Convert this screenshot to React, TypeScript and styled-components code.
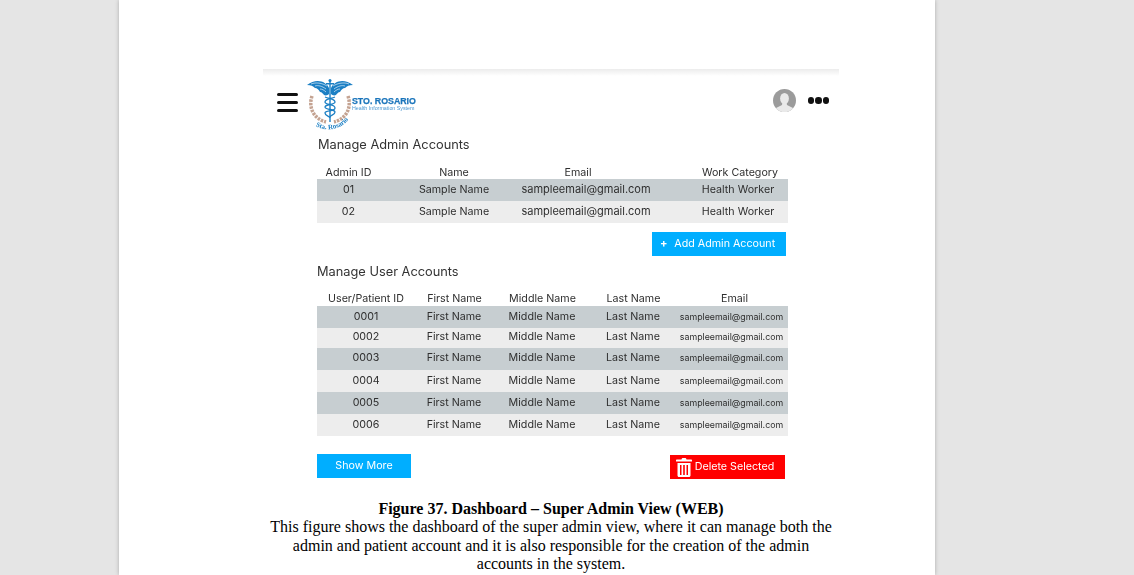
import React from 'react';
import styled, { createGlobalStyle } from 'styled-components';

const adminRows = [
  { id: '01', name: 'Sample Name', email: 'sampleemail@gmail.com', work: 'Health Worker' },
  { id: '02', name: 'Sample Name', email: 'sampleemail@gmail.com', work: 'Health Worker' },
];

const userRows = [
  { id: '0001', height: 22, lift: 1 },
  { id: '0002', height: 20, lift: 2 },
  { id: '0003', height: 22, lift: 2 },
  { id: '0004', height: 22, lift: 1 },
  { id: '0005', height: 22, lift: 1 },
  { id: '0006', height: 22, lift: 1 },
];

const adminColumns = '63px 148px 116px 144px';
const userColumns = '98px 78px 98px 84px 113px';

const GlobalStyle = createGlobalStyle`
  html, body {
    margin: 0;
    height: 575px;
    overflow: hidden;
    background: #e5e5e5;
  }
`;

const Paper = styled.div`
  width: 816px;
  height: 575px;
  margin-left: 119px;
  padding: 69px 96px 0 144px;
  box-sizing: border-box;
  background: #fff;
  box-shadow: 0 0 4px rgba(0, 0, 0, 0.25);
  overflow: hidden;
`;

const Figure = styled.div`
  background: linear-gradient(#ececec, #fff 7px);
`;

const Shot = styled.div`
  font-family: Inter, "Noto Sans", sans-serif;
  color: #2f2f2f;
  filter: blur(0.25px);
`;

const TopBar = styled.div`
  height: 67px;
  display: flex;
  align-items: flex-start;
  padding: 10px 10px 0 14px;
  box-sizing: border-box;
`;

const Burger = styled.div`
  width: 21px;
  margin: 14px 9px 0 0;
  display: flex;
  flex-direction: column;
  gap: 5px;
  span {
    height: 3px;
    border-radius: 2px;
    background: #111;
  }
`;

const LogoMark = styled.svg`
  flex: none;
  margin-right: -1px;
`;

const BrandText = styled.div`
  margin: 17px 0 0 0;
  font-family: "Liberation Sans", Arial, sans-serif;
  color: #1b75bb;
  strong {
    display: block;
    font-size: 8.8px;
    line-height: 10px;
    white-space: nowrap;
    -webkit-text-stroke: 0.25px #1b75bb;
  }
  small {
    display: block;
    font-size: 5.3px;
    line-height: 5px;
    color: #4a97d2;
    white-space: nowrap;
  }
`;

const TopActions = styled.div`
  margin: 10px 0 0 auto;
  display: flex;
  align-items: center;
  gap: 12px;
`;

const Dots = styled.div`
  display: flex;
  gap: 1px;
  i {
    width: 6.5px;
    height: 6.5px;
    border-radius: 50%;
    background: #111;
  }
`;

const Content = styled.div`
  margin-left: 54px;
  width: 471px;
`;

const SectionTitle = styled.h2<{ $indent?: number; $top?: number }>`
  margin: ${(p) => p.$top ?? 0}px 0 0 ${(p) => p.$indent ?? 0}px;
  font-size: 12.8px;
  line-height: 18px;
  font-weight: 400;
  color: #333;
`;

const Row = styled.div<{ $columns: string; $height: number; $tone?: 'dark' | 'light'; $lift?: number }>`
  display: grid;
  grid-template-columns: ${(p) => p.$columns};
  height: ${(p) => p.$height}px;
  box-sizing: border-box;
  padding-bottom: ${(p) => (p.$lift ?? 0) * 2}px;
  align-items: center;
  background: ${(p) => (p.$tone === 'dark' ? '#c7ced1' : p.$tone === 'light' ? '#ededed' : 'transparent')};
`;

const Cell = styled.div<{ $size?: number; $shift?: number; $pull?: number }>`
  display: flex;
  justify-content: center;
  white-space: nowrap;
  font-size: ${(p) => p.$size ?? 10.7}px;
  padding-left: ${(p) => p.$shift ?? 0}px;
  padding-right: ${(p) => p.$pull ?? 0}px;
`;

const Table = styled.div<{ $top: number }>`
  margin-top: ${(p) => p.$top}px;
`;

const ActionRight = styled.div`
  display: flex;
  justify-content: flex-end;
  margin: 9px 2px 0 0;
`;

const Button = styled.button<{ $color: string; $width: number }>`
  width: ${(p) => p.$width}px;
  height: 24px;
  padding: 0 0 2px;
  box-sizing: border-box;
  border: none;
  background: ${(p) => p.$color};
  color: #fff;
  font-family: inherit;
  font-size: 10.7px;
  display: flex;
  align-items: center;
  justify-content: center;
  gap: 7px;
`;

const PlusMark = styled.span`
  font-size: 11px;
  font-weight: 700;
  margin-left: -3px;
`;

const Footer = styled.div`
  display: flex;
  justify-content: space-between;
  align-items: flex-start;
  margin: 18px 3px 0 0;
`;

const DeleteButton = styled(Button)`
  margin-top: 1px;
  gap: 3px;
  padding-right: 5px;
  svg {
    margin-top: 2px;
  }
`;

const Caption = styled.div`
  margin-top: 21px;
  font-family: "Liberation Serif", "Times New Roman", serif;
  font-size: 16px;
  line-height: 18.4px;
  color: #000;
  text-align: center;
  white-space: nowrap;
  b {
    display: block;
  }
`;

const Logo = () => (
  <LogoMark width="46" height="52" viewBox="0 0 46 52">
    <g fill="#1b7fc4">
      <path d="M22 9C19 2 9-1 0 6c4 0 6 1 8 3 2 0 4 2 5 4 2 0 3 2 4 3 2 1 4 0 5-1z" />
      <path d="M24 9c3-7 13-10 22-3-4 0-6 1-8 3-2 0-4 2-5 4-2 0-3 2-4 3-2 1-4 0-5-1z" />
      <rect x="22.300" y="1" width="1.400" height="42" />
      <rect x="19" y="4" width="8" height="1.500" />
      <circle cx="23" cy="1.500" r="1.500" />
    </g>
    <g fill="none" stroke="#fff" strokeWidth="0.6">
      <path d="M20 7C15 4 9 3 4 5M19 10C15 7 11 6 8 7M19 13c-2-2-4-3-6-3" />
      <path d="M26 7c5-3 11-4 16-2M27 10c4-3 8-4 11-3M27 13c2-2 4-3 6-3" />
    </g>
    <g fill="none" stroke="#1b7fc4" strokeWidth="1.300">
      <path d="M18 18c5 2 10 2 10 5s-10 2-10 5 10 2 10 5-5 3-5 5" />
      <path d="M28 18c-5 2-10 2-10 5s10 2 10 6-10 2-10 5 5 3 5 5" />
    </g>
    <g fill="none" stroke="#c4a392" strokeWidth="3.500" strokeDasharray="2.500 1">
      <path d="M5 17C1 29 7 40 19 43" />
      <path d="M41 17c4 12-2 23-14 26" />
    </g>
    <defs>
      <path id="logo-arc" d="M4 43c8 10 28 10 37-2" />
    </defs>
    <text fontFamily="'Liberation Serif', serif" fontSize="7" fontWeight="700" fill="#1b7fc4">
      <textPath href="#logo-arc" startOffset="6">Sta. Rosario</textPath>
    </text>
  </LogoMark>
);

const Avatar = () => (
  <svg width="23" height="23" viewBox="0 0 23 23">
    <defs>
      <clipPath id="avatar-clip">
        <circle cx="11.500" cy="11.500" r="11.500" />
      </clipPath>
    </defs>
    <g clipPath="url(#avatar-clip)">
      <rect width="23" height="23" fill="#9b9b9b" />
      <ellipse cx="11.500" cy="9.500" rx="4.400" ry="5.500" fill="#e9e9e9" />
      <path d="M9.500 13h4l.5 3 6 3v4H3v-4l6-3z" fill="#e9e9e9" />
    </g>
  </svg>
);

const TrashIcon = () => (
  <svg width="16" height="19" viewBox="0 0 16 19" fill="#fff">
    <path d="M5.500 1.500C5.500.6 6.200 0 7 0h2c.8 0 1.500.6 1.500 1.500H15c.6 0 1 .4 1 1v1H0v-1c0-.6.4-1 1-1z" />
    <path fillRule="evenodd" d="M1.500 5h13v12.500c0 .8-.7 1.500-1.500 1.500H3c-.8 0-1.500-.7-1.500-1.500zM4 7v10h1.500V7zm3.200 0v10h1.600V7zm3.300 0v10H12V7z" />
  </svg>
);

const App = () => (
  <>
    <GlobalStyle />
    <Paper>
      <Figure>
        <Shot>
          <TopBar>
            <Burger>
              <span />
              <span />
              <span />
            </Burger>
            <Logo />
            <BrandText>
              <strong>STO. ROSARIO</strong>
              <small>Health Information System</small>
            </BrandText>
            <TopActions>
              <Avatar />
              <Dots>
                <i />
                <i />
                <i />
              </Dots>
            </TopActions>
          </TopBar>
          <Content>
            <SectionTitle $indent={1}>Manage Admin Accounts</SectionTitle>
            <Table $top={11}>
              <Row $columns={adminColumns} $height={14}>
                <Cell>Admin ID</Cell>
                <Cell>Name</Cell>
                <Cell $pull={16}>Email</Cell>
                <Cell $shift={48}>Work Category</Cell>
              </Row>
              {adminRows.map((row, i) => (
                <Row key={row.id} $columns={adminColumns} $height={22} $lift={1} $tone={i === 0 ? 'dark' : 'light'}>
                  <Cell>{row.id}</Cell>
                  <Cell>{row.name}</Cell>
                  <Cell $size={11}>{row.email}</Cell>
                  <Cell $shift={44}>{row.work}</Cell>
                </Row>
              ))}
            </Table>
            <ActionRight>
              <Button $color="#00aeff" $width={134}>
                <PlusMark>+</PlusMark>
                Add Admin Account
              </Button>
            </ActionRight>
            <SectionTitle $top={7}>Manage User Accounts</SectionTitle>
            <Table $top={10}>
              <Row $columns={userColumns} $height={15}>
                <Cell>User/Patient ID</Cell>
                <Cell $shift={1}>First Name</Cell>
                <Cell $shift={1}>Middle Name</Cell>
                <Cell $shift={1}>Last Name</Cell>
                <Cell $shift={6}>Email</Cell>
              </Row>
              {userRows.map((row, i) => (
                <Row key={row.id} $columns={userColumns} $height={row.height} $lift={row.lift} $tone={i % 2 === 0 ? 'dark' : 'light'}>
                  <Cell>{row.id}</Cell>
                  <Cell>First Name</Cell>
                  <Cell>Middle Name</Cell>
                  <Cell>Last Name</Cell>
                  <Cell $size={8.8}>sampleemail@gmail.com</Cell>
                </Row>
              ))}
            </Table>
            <Footer>
              <Button $color="#00aeff" $width={94}>Show More</Button>
              <DeleteButton $color="#ff0000" $width={115}>
                <TrashIcon />
                Delete Selected
              </DeleteButton>
            </Footer>
          </Content>
        </Shot>
        <Caption>
          <b>Figure 37. Dashboard – Super Admin View (WEB)</b>
          This figure shows the dashboard of the super admin view, where it can manage both the
          <br />
          admin and patient account and it is also responsible for the creation of the admin
          <br />
          accounts in the system.
        </Caption>
      </Figure>
    </Paper>
  </>
);

export default App;
